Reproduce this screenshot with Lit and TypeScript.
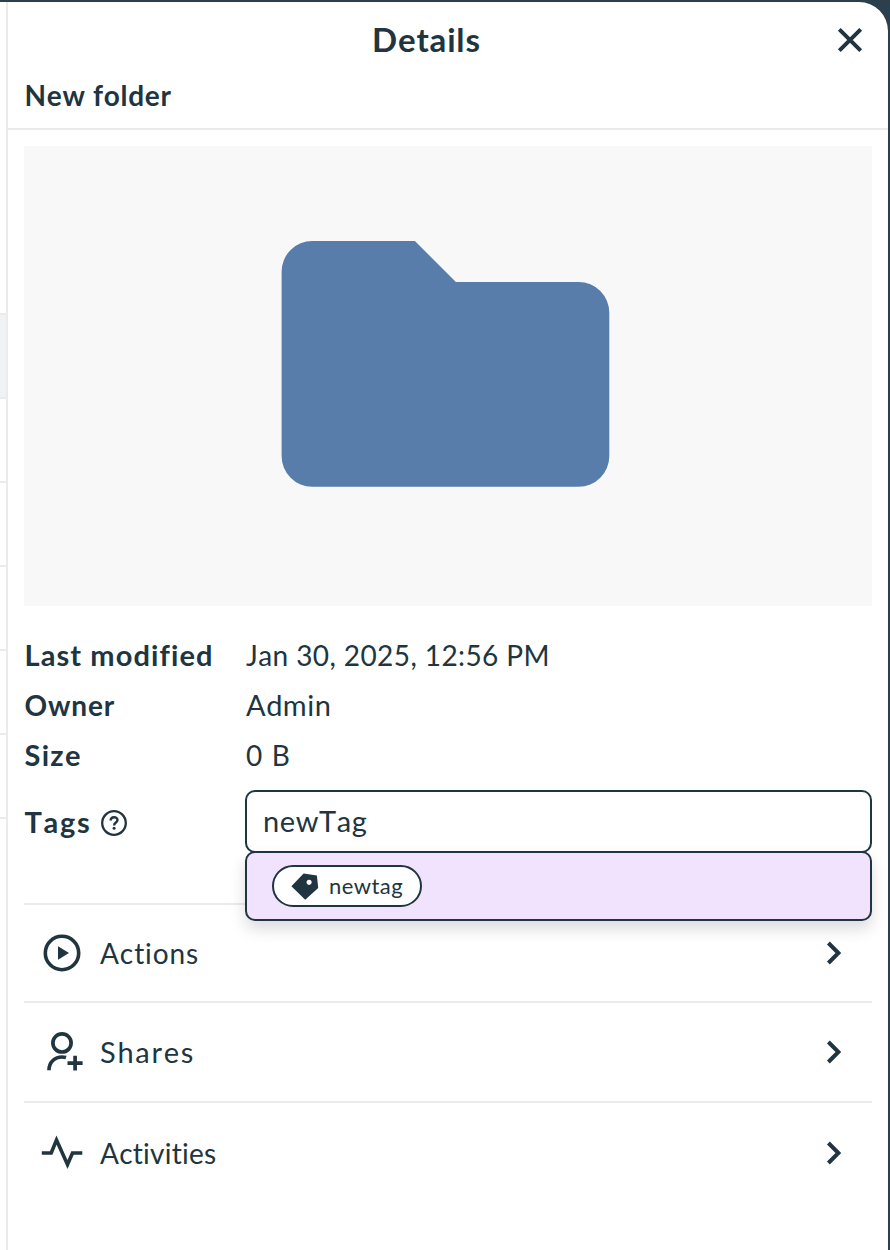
import { LitElement, html, css, svg } from "lit";
import { customElement } from "lit/decorators.js";

const closeIcon = svg`<svg class="close" width="26" height="26" viewBox="0 0 26 26"><path d="M2.3 2.3L23.7 23.7M23.7 2.3L2.3 23.7" fill="none" stroke="currentColor" stroke-width="4"/></svg>`;
const chevron = svg`<svg class="chevron" width="18" height="26" viewBox="0 0 18 26"><path d="M2.4 3L12.4 13L2.4 23" fill="none" stroke="currentColor" stroke-width="4"/></svg>`;
const folderIcon = svg`<svg class="folder" width="329" height="246" viewBox="0 0 329 246"><path d="M30.7 0H133.3L174.3 41H297A30.7 30.7 0 0 1 327.7 71.7V215A30.7 30.7 0 0 1 297 245.8H30.7A30.7 30.7 0 0 1 0 215V30.7A30.7 30.7 0 0 1 30.7 0Z" transform="translate(.6 0)" fill="#587dab"/></svg>`;
const playIcon = svg`<svg width="44" height="44" viewBox="0 0 44 44"><circle cx="22" cy="22" r="16.7" fill="none" stroke="currentColor" stroke-width="3.6"/><path d="M18 15.2L29 22L18 28.8Z" fill="currentColor"/></svg>`;
const shareIcon = svg`<svg width="44" height="44" viewBox="0 0 44 44"><g fill="none" stroke="currentColor" stroke-width="3.7"><circle cx="22" cy="12.9" r="9.1"/><path d="M9 40.2C9 32 15 27 22 27C23.4 27 24.7 27.2 26 27.6M27.5 33.2H42.6M35.1 25.8V40.4"/></g></svg>`;
const pulseIcon = svg`<svg width="44" height="44" viewBox="0 0 44 44"><path d="M1.8 22H11.2L16.5 9L27.5 33.5L32.5 22H42.3" fill="none" stroke="currentColor" stroke-width="3.6" stroke-miterlimit="10"/></svg>`;
const tagIcon = svg`<svg width="28" height="27" viewBox="0 0 28 27"><path fill-rule="evenodd" d="M.4 13.3L12.6 .4L25.9 2.5L27.2 15L14.2 26.8ZM18.1 6.7a2.6 2.6 0 1 0 .01 0Z" fill="currentColor"/></svg>`;
const helpIcon = svg`<svg class="help" width="28" height="28" viewBox="0 0 28 28"><g fill="none" stroke="currentColor"><circle cx="14" cy="14" r="11.8" stroke-width="2.3"/><path d="M10.6 11.5C10.8 7.2 17.4 7.2 17.5 11.1C17.5 13.6 14.1 13.4 14.1 16.4" stroke-width="2.4"/></g><circle cx="14.1" cy="19.3" r="1.5" fill="currentColor"/></svg>`;

@customElement("app-root")
export class AppRoot extends LitElement {
  static styles = css`
    :host { display: block; height: 1250px; overflow: hidden; box-sizing: border-box; padding: 2px 2px 0 0;
      background: #2b3f4c; color: #20353f; font: 400 28px/50px Lato, sans-serif; font-variant-ligatures: none; font-kerning: none; }
    svg { display: block; flex: none; }
    * { box-sizing: border-box; }
    .window { display: flex; height: 1248px; background: #fff; border-top-right-radius: 29px; overflow: hidden; }
    .strip { width: 6px; padding-top: 311px; flex: none; }
    .line { height: 84px; border-top: 2px solid #ebebec; }
    .line.on { background: #f1f2f4; }
    .line.last { height: 2px; }
    .panel { flex: 1; border-left: 2px solid #ebebec; }
    .head { height: 128px; border-bottom: 2px solid #ebebec; padding-left: 16.5px; }
    .bar { display: flex; height: 76px; align-items: center; justify-content: space-between; padding: 0 25px 0 347.5px; }
    .title { font-size: 33px; font-weight: 700; letter-spacing: .85px; padding-bottom: 2px; }
    .name { font-weight: 700; line-height: 34px; }
    .body { padding: 16px 16px 0; }
    .preview { height: 460px; background: #f8f8f8; padding: 95px 0 0 257px; }
    .facts { display: grid; grid-template-columns: 221px 627px; grid-template-rows: 50px 50px 50px 79px; padding: 24px 0 0; height: 297px; }
    .key { font-weight: 700; display: flex; padding-left: .5px; }
    .val { padding-left: 1px; }
    .key.tags { padding-top: 17px; }
    .help { margin: 12px 0 0; }
    .field { position: relative; margin-top: 10px; height: 63px; border: 2px solid #20353f; border-radius: 10px; line-height: 57px; padding-left: 16px; }
    .drop { position: absolute; z-index: 2; left: -2px; top: 59px; width: 627px; height: 70px; border: 2px solid #20353f; border-radius: 10px; background: #f1e3fd; padding: 12px 25px; box-shadow: 0 8px 16px rgba(0,0,0,.14); }
    .chip { display: flex; align-items: center; gap: 10px; width: 150px; height: 42px; border: 2px solid #20353f; border-radius: 21px; background: #fff; padding: 0 0 0 17px; font-size: 22px; line-height: 38px; }
    .item { display: flex; align-items: center; height: 98px; border-top: 2px solid #ebebec; padding: 0 28px 0 16px; }
    .item.tall { height: 100px; }
    .item.end { padding-top: 2px; }
    .item .label { flex: 1; padding-left: 16px; }
    .s-name { letter-spacing: .7px; }
    .s-mod { font-size: 29px; letter-spacing: 1.1px; }
    .s-owner { letter-spacing: .85px; }
    .s-size { font-size: 29px; letter-spacing: 1.3px; }
    .s-tags { font-size: 29px; letter-spacing: 1.7px; width: 75.5px; }
    .s-date { letter-spacing: .41px; }
    .s-admin { font-size: 29px; letter-spacing: .5px; }
    .s-zero { letter-spacing: 1.2px; }
    .s-input { font-size: 29px; letter-spacing: .6px; }
    .s-chip { letter-spacing: .45px; }
    .s-actions { letter-spacing: .9px; }
    .s-shares { font-size: 29px; letter-spacing: 1.7px; }
    .s-activities { letter-spacing: .25px; }
  `;

  render() {
    return html`
      <div class="window">
        <div class="strip">
          <div class="line on"></div><div class="line"></div><div class="line"></div><div class="line"></div>
          <div class="line"></div><div class="line"></div><div class="line last"></div>
        </div>
        <div class="panel">
          <div class="head">
            <div class="bar"><span class="title">Details</span>${closeIcon}</div>
            <div class="name"><span class="s-name">New folder</span></div>
          </div>
          <div class="body">
            <div class="preview">${folderIcon}</div>
            <div class="facts">
              <div class="key"><span class="s-mod">Last modified</span></div><div class="val"><span class="s-date">Jan 30, 2025, 12:56 PM</span></div>
              <div class="key"><span class="s-owner">Owner</span></div><div class="val"><span class="s-admin">Admin</span></div>
              <div class="key"><span class="s-size">Size</span></div><div class="val"><span class="s-zero">0 B</span></div>
              <div class="key tags"><span class="s-tags">Tags</span>${helpIcon}</div>
              <div class="field"><span class="s-input">newTag</span>
                <div class="drop"><div class="chip">${tagIcon}<span class="s-chip">newtag</span></div></div>
              </div>
            </div>
            <div class="item">${playIcon}<span class="label s-actions">Actions</span>${chevron}</div>
            <div class="item tall">${shareIcon}<span class="label s-shares">Shares</span>${chevron}</div>
            <div class="item tall end">${pulseIcon}<span class="label s-activities">Activities</span>${chevron}</div>
          </div>
        </div>
      </div>`;
  }
}
